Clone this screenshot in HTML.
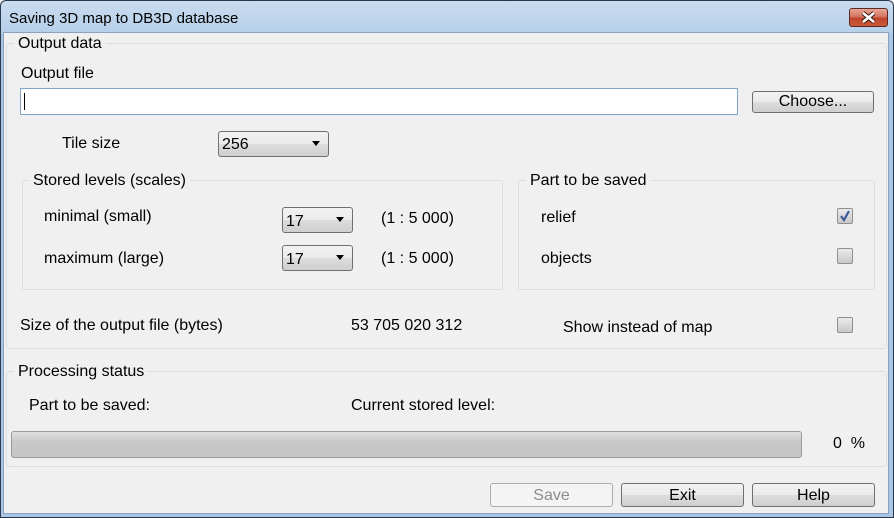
<!DOCTYPE html>
<html><head><style>
*{margin:0;padding:0;box-sizing:border-box}
body{width:894px;height:518px;overflow:hidden;background:#f0f0f0;font-family:"Liberation Sans","DejaVu Sans",sans-serif;font-size:16px;color:#000;position:relative}
.a{position:absolute;white-space:nowrap}
.frame{position:absolute;left:0;top:0;width:894px;height:518px;border:1px solid #2b3a4a;border-radius:6px 6px 0 0;background:linear-gradient(#c9dcf0,#b6cfe9 32px,#a9c6e6 33px);}
.client{position:absolute;left:3px;top:32px;width:886px;height:482px;background:#f0f0f0;border:1px solid #8aa3bd}
.grp{position:absolute;border:1px solid #d5dfe5;border-radius:3px}
.lg{position:absolute;background:#f0f0f0;padding:0 4px;line-height:16px}
.btn{position:absolute;border:1px solid #707070;border-radius:3px;background:linear-gradient(#f2f2f2,#ebebeb 50%,#dddddd 51%,#cfcfcf);text-align:center;line-height:20px}
.cb{position:absolute;border:1px solid #8f8f8f;border-radius:2px;background:linear-gradient(#ebebeb,#c8c8c8);width:16px;height:16px}
.sel{position:absolute;border:1px solid #707070;border-radius:3px;background:linear-gradient(#f2f2f2,#ebebeb 50%,#dddddd 51%,#cfcfcf);line-height:22px;padding-left:3px}
.sel:after{content:"";position:absolute;right:8px;top:9px;border-left:4px solid transparent;border-right:4px solid transparent;border-top:5px solid #000}
</style></head><body>
<div class="frame"></div>
<div class="a" style="left:9px;top:10px;font-size:15px;color:#000">Saving 3D map to DB3D database</div>
<div class="a" style="left:849px;top:8px;width:39px;height:19px;border:1px solid #5a2a22;border-radius:3px;background:linear-gradient(#e8a596,#d0705a 50%,#c0422a 51%,#c85a3a)">
<svg width="37" height="17" viewBox="0 0 37 17"><path d="M13 4 L24 13 M24 4 L13 13" stroke="#3a1a14" stroke-width="4.5"/><path d="M13 4 L24 13 M24 4 L13 13" stroke="#fff" stroke-width="2.5"/></svg></div>
<div class="client"></div>

<div class="grp" style="left:6px;top:43px;width:881px;height:306px"></div>
<div class="lg" style="left:14px;top:36px">Output data</div>
<div class="a" style="left:21px;top:65px">Output file</div>
<div class="a" style="left:20px;top:88px;width:718px;height:27px;border:1px solid #7fa6c9;background:#fff"><div style="position:absolute;left:3px;top:4px;width:1px;height:17px;background:#000"></div></div>
<div class="btn" style="left:752px;top:91px;width:122px;height:22px">Choose...</div>
<div class="a" style="left:62px;top:135px">Tile size</div>
<div class="sel" style="left:218px;top:131px;width:111px;height:26px;line-height:26px">256</div>

<div class="grp" style="left:22px;top:180px;width:481px;height:110px"></div>
<div class="lg" style="left:29px;top:173px">Stored levels (scales)</div>
<div class="a" style="left:44px;top:208px">minimal (small)</div>
<div class="sel" style="left:282px;top:207px;width:71px;height:26px;line-height:27px">17</div>
<div class="a" style="left:381px;top:210px">(1 : 5 000)</div>
<div class="a" style="left:44px;top:250px">maximum (large)</div>
<div class="sel" style="left:282px;top:245px;width:71px;height:26px;line-height:27px">17</div>
<div class="a" style="left:381px;top:250px">(1 : 5 000)</div>

<div class="grp" style="left:518px;top:180px;width:357px;height:110px"></div>
<div class="lg" style="left:526px;top:173px">Part to be saved</div>
<div class="a" style="left:541px;top:209px">relief</div>
<div class="cb" style="left:837px;top:208px"><svg width="14" height="14" viewBox="0 0 14 14" style="position:absolute;left:0;top:0"><path d="M3 7 L6 11 L11 2" stroke="#3c5a9c" stroke-width="2.2" fill="none"/></svg></div>
<div class="a" style="left:541px;top:250px">objects</div>
<div class="cb" style="left:837px;top:248px"></div>

<div class="a" style="left:20px;top:317px">Size of the output file (bytes)</div>
<div class="a" style="left:351px;top:317px">53 705 020 312</div>
<div class="a" style="left:563px;top:319px">Show instead of map</div>
<div class="cb" style="left:837px;top:317px"></div>

<div class="grp" style="left:6px;top:371px;width:881px;height:96px"></div>
<div class="lg" style="left:14px;top:364px">Processing status</div>
<div class="a" style="left:29px;top:397px">Part to be saved:</div>
<div class="a" style="left:351px;top:397px">Current stored level:</div>
<div class="a" style="left:11px;top:431px;width:791px;height:27px;border:1px solid #9a9a9a;border-radius:3px;background:linear-gradient(#e0e0e0,#c8c8c8 40%,#c6c6c6)"></div>
<div class="a" style="left:833px;top:435px">0&nbsp;&nbsp;%</div>

<div class="btn" style="left:490px;top:483px;width:123px;height:24px;border-color:#adadad;background:#f4f4f4;color:#8d8d8d;line-height:23px">Save</div>
<div class="btn" style="left:621px;top:483px;width:123px;height:24px;line-height:23px">Exit</div>
<div class="btn" style="left:752px;top:483px;width:123px;height:24px;line-height:23px">Help</div>
</body></html>
